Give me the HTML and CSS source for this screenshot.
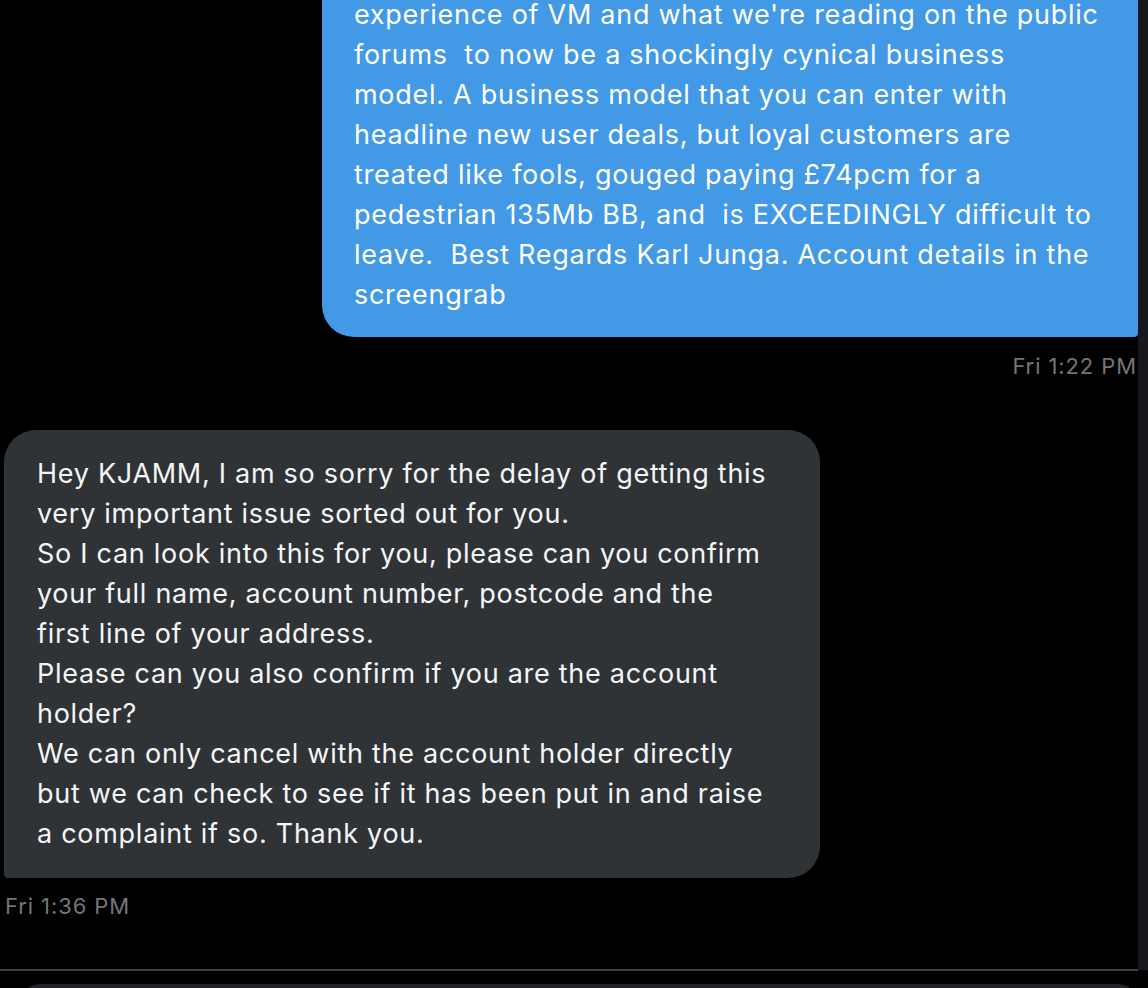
FILE: index.html
```html
<!DOCTYPE html>
<html lang="en">
<head>
<meta charset="utf-8">
<title>Messages</title>
<link rel="stylesheet" href="styles.css">
</head>
<body>
<div class="page">
  <div class="main">
    <div class="thread">
      <div class="msg sent">
        <div class="bubble bubble-sent">experience of VM and what we're reading on the public<br>forums  to now be a shockingly cynical business<br>model. A business model that you can enter with<br>headline new user deals, but loyal customers are<br>treated like fools, gouged paying £74pcm for a<br>pedestrian 135Mb BB, and  is EXCEEDINGLY difficult to<br>leave.  Best Regards Karl Junga. Account details in the<br>screengrab</div>
        <div class="time time-sent">Fri 1:22 PM</div>
      </div>
      <div class="msg recv">
        <div class="bubble bubble-recv">Hey KJAMM, I am so sorry for the delay of getting this<br>very important issue sorted out for you.<br>So I can look into this for you, please can you confirm<br>your full name, account number, postcode and the<br>first line of your address.<br>Please can you also confirm if you are the account<br>holder?<br>We can only cancel with the account holder directly<br>but we can check to see if it has been put in and raise<br>a complaint if so. Thank you.</div>
        <div class="time time-recv">Fri 1:36 PM</div>
      </div>
    </div>
    <div class="composer">
      <div class="composer-box"></div>
    </div>
  </div>
  <div class="side"></div>
</div>
</body>
</html>
```

FILE: styles.css
```css
html, body {
  margin: 0;
  padding: 0;
  background: #000;
  height: 100%;
  overflow: hidden;
}
body {
  font-family: Inter, "Noto Sans", sans-serif;
  color: #fff;
}
.page {
  display: flex;
  height: 988px;
}
.main {
  flex: 0 0 1138px;
  display: flex;
  flex-direction: column;
  overflow: hidden;
}
.side {
  flex: 1;
  background: #16181c;
  height: 970px;
}
.thread {
  flex: 0 0 969px;
  height: 969px;
  display: flex;
  flex-direction: column;
}
.msg {
  display: flex;
  flex-direction: column;
}
.sent {
  align-items: flex-end;
  margin-top: -30px;
}
.recv {
  align-items: flex-start;
  margin-top: 50px;
  padding-left: 4px;
}
.bubble {
  width: 816px;
  box-sizing: border-box;
  padding: 25px 32px 22px 32px;
  font-size: 27px;
  line-height: 40px;
  white-space: pre-wrap;
  letter-spacing: 0.72px;
}
.bubble-sent {
  background: #4299e6;
  color: #fff;
  border-radius: 32px 32px 4px 32px;
}
.bubble-recv {
  background: #2f3336;
  color: #f4f5f6;
  border-radius: 32px 32px 32px 4px;
  padding: 24px 33px 24px 33px;
}
.time {
  font-size: 22px;
  line-height: 28px;
  color: #71767b;
  letter-spacing: 0.9px;
}
.time-sent {
  margin-top: 15px;
  margin-right: 1px;
}
.time-recv {
  margin-top: 14px;
  margin-left: 1px;
}
.composer {
  flex: 0 0 auto;
  border-top: 2px solid #3e4144;
  padding: 13px 0 0 20px;
}
.composer-box {
  height: 40px;
  background: #202327;
  border-radius: 20px;
}
```
